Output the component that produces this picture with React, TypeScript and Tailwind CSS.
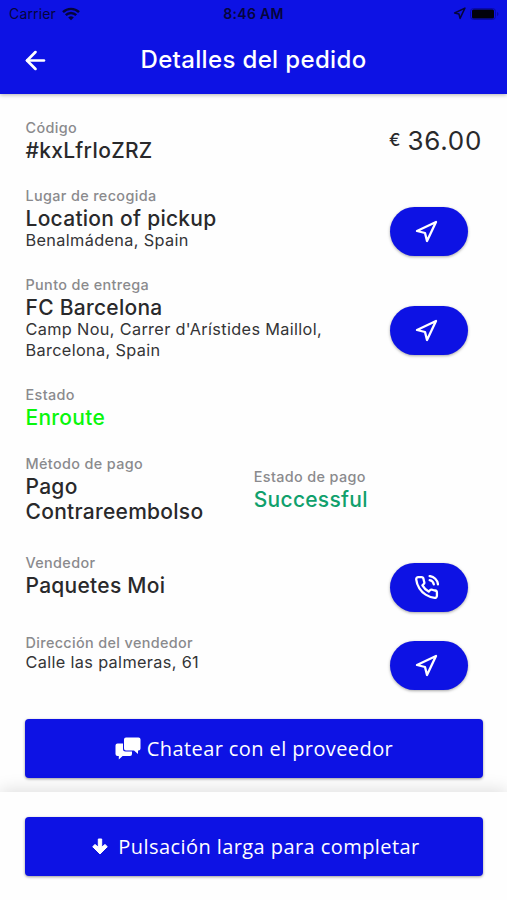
import type { ReactNode } from "react";
import { ArrowLeft, Navigation } from "lucide-react";
import { FiPhoneCall } from "react-icons/fi";

const inter = "font-[Inter,'Liberation_Sans',sans-serif]";

function Label({ children }: { children: ReactNode }) {
  return <div className="h-[18px] whitespace-nowrap text-[14.4px] leading-[18px] font-[450] tracking-[0.36px] text-[#8a8a8d]">{children}</div>;
}

function Title({ children, className = "text-[#29292b]" }: { children: ReactNode; className?: string }) {
  return <div className={`-mb-[1px] pt-[1px] text-[21px] leading-[25px] font-[450] tracking-[0.27px] ${className}`}>{children}</div>;
}

function Sub({ children }: { children: ReactNode }) {
  return <div className="whitespace-nowrap text-[16.3px] leading-[21px] tracking-[0.34px] text-[#343436]">{children}</div>;
}

function Pill({ children, className = "" }: { children: ReactNode; className?: string }) {
  return (
    <button className={`mr-[14px] flex h-[49px] w-[78px] shrink-0 items-center justify-center rounded-full bg-[#0d12e4] pr-[5px] text-white shadow-[0_1px_3px_rgba(0,0,0,0.35)] ${className}`}>
      {children}
    </button>
  );
}

function DirectionsIcon() {
  return <Navigation size={24} strokeWidth={2.3} className="mr-[2px]" />;
}

function ChatIcon() {
  return (
    <svg width="26" height="23" viewBox="0 0 26 23" fill="currentColor">
      <path d="M11 .5h12.500a2 2 0 0 1 2 2v9a2 2 0 0 1-2 2h-.5v3.500L19 13.500h-8a2 2 0 0 1-2-2v-9a2 2 0 0 1 2-2Z" />
      <path d="M8 6.500H2.500a2 2 0 0 0-2 2V17a2 2 0 0 0 2 2h1.300v3.500L7.600 19H15a2 2 0 0 0 2-2v-2.500h-6.500A2.500 2.500 0 0 1 8 12Z" />
    </svg>
  );
}

function WifiIcon() {
  return (
    <svg width="18" height="14" viewBox="0 0 18 14" fill="none" stroke="currentColor" strokeWidth="2.400">
      <path d="M1 5.200a11.300 11.300 0 0 1 16 0M3.800 8.200a7.300 7.300 0 0 1 10.400 0" />
      <path d="M9 13.300 6.200 10.500a4 4 0 0 1 5.600 0Z" fill="currentColor" stroke="none" />
    </svg>
  );
}

export default function App() {
  return (
    <div className={`flex h-[900px] w-[507px] flex-col overflow-hidden bg-[#fefefe] ${inter}`}>
      <header className="z-10 h-[94px] shrink-0 bg-[#0d12e4] shadow-[0_1px_4px_rgba(0,0,0,0.3)]">
        <div className="grid h-[27px] grid-cols-3 items-center px-[9px] text-[#05053c]">
          <div className="flex items-center gap-[6px]">
            <span className="text-[14px] tracking-[0.15px]">Carrier</span>
            <WifiIcon />
          </div>
          <div className="text-center text-[14px] font-semibold tracking-[0.3px] whitespace-nowrap">8:46 AM</div>
          <div className="flex items-center justify-end gap-[4px]">
            <Navigation size={13} strokeWidth={2.8} />
            <svg width="29" height="12" viewBox="0 0 29 12" className="mr-[-1px]">
              <rect x=".5" y=".5" width="25" height="11" rx="3" fill="none" stroke="#0909a8" />
              <rect x="2" y="1.500" width="22" height="9" rx="1.500" fill="#02020c" />
              <path d="M27 4v4q1.500-.5 1.500-2T27 4Z" fill="#0909a8" />
            </svg>
          </div>
        </div>
        <div className="grid h-[67px] grid-cols-[1fr_auto_1fr] items-center text-white">
          <ArrowLeft size={29} strokeWidth={2.2} className="ml-[20.5px]" />
          <h1 className="-mt-[1px] text-[24px] leading-[30px] font-medium tracking-[0.35px]">Detalles del pedido</h1>
        </div>
      </header>

      <main className="flex h-[698px] shrink-0 flex-col px-[25px] pt-[25px]">
        <div className="flex h-[68px] justify-between pl-[0.5px]">
          <div>
            <Label>Código</Label>
            <Title>#kxLfrIoZRZ</Title>
          </div>
          <div className="mt-[5px] flex h-[32px] items-center gap-[7px] text-[#29292b]">
            <span className="mt-[2px] text-[17px] font-medium">€</span>
            <span className="text-[26px] tracking-[0.7px]">36.00</span>
          </div>
        </div>
        <div className="flex h-[89px] justify-between pl-[0.5px]">
          <div>
            <Label>Lugar de recogida</Label>
            <Title>Location of pickup</Title>
            <Sub>Benalmádena, Spain</Sub>
          </div>
          <Pill className="mt-[20px]"><DirectionsIcon /></Pill>
        </div>
        <div className="flex h-[110px] justify-between pl-[0.5px]">
          <div>
            <Label>Punto de entrega</Label>
            <Title>FC Barcelona</Title>
            <Sub>Camp Nou, Carrer d'Arístides Maillol,<br />Barcelona, Spain</Sub>
          </div>
          <Pill className="mt-[30px]"><DirectionsIcon /></Pill>
        </div>
        <div className="h-[69px] pl-[0.5px]">
          <Label>Estado</Label>
          <Title className="text-[#09f60c]">Enroute</Title>
        </div>
        <div className="grid h-[99px] grid-cols-2 pl-[0.5px]">
          <div>
            <Label>Método de pago</Label>
            <Title>Pago<br />Contrareembolso</Title>
          </div>
          <div className="pt-[13px]">
            <Label>Estado de pago</Label>
            <Title className="text-[#10a06c]">Successful</Title>
          </div>
        </div>
        <div className="flex h-[80px] justify-between pl-[0.5px]">
          <div>
            <Label>Vendedor</Label>
            <Title>Paquetes Moi</Title>
          </div>
          <Pill className="mt-[9px]"><FiPhoneCall size={25} strokeWidth={2.2} /></Pill>
        </div>
        <div className="flex h-[85px] justify-between pl-[0.5px]">
          <div>
            <Label>Dirección del vendedor</Label>
            <Sub>Calle las palmeras, 61</Sub>
          </div>
          <Pill className="mt-[7px]"><DirectionsIcon /></Pill>
        </div>
        <button className="flex h-[59px] w-[458px] shrink-0 items-center justify-center gap-[6px] rounded-[4px] bg-[#0d12e4] font-['Open_Sans','Noto_Sans',sans-serif] text-[20px] tracking-[0.4px] text-white shadow-[0_1px_3px_rgba(0,0,0,0.4)]">
          <ChatIcon />
          <span>Chatear con el proveedor</span>
        </button>
      </main>

      <footer className="h-[108px] shrink-0 bg-[#fefefe] px-[25px] pt-[25px] shadow-[0_-2px_16px_rgba(0,0,0,0.13)]">
        <button className="flex h-[59px] w-[458px] items-center justify-center gap-[10px] rounded-[4px] bg-[#0d12e4] pl-[4px] font-['Open_Sans','Noto_Sans',sans-serif] text-[20px] tracking-[0.43px] text-white shadow-[0_1px_3px_rgba(0,0,0,0.4)]">
          <svg width="16" height="17" viewBox="0 0 16 17" fill="currentColor" stroke="currentColor" strokeWidth="1" strokeLinejoin="round">
            <path d="M6.300 1h3.400v8.200l3.300-2.700 2.300 2.200L8 16 .7 8.700 3 6.500l3.300 2.700Z" />
          </svg>
          <span>Pulsación larga para completar</span>
        </button>
      </footer>
    </div>
  );
}
